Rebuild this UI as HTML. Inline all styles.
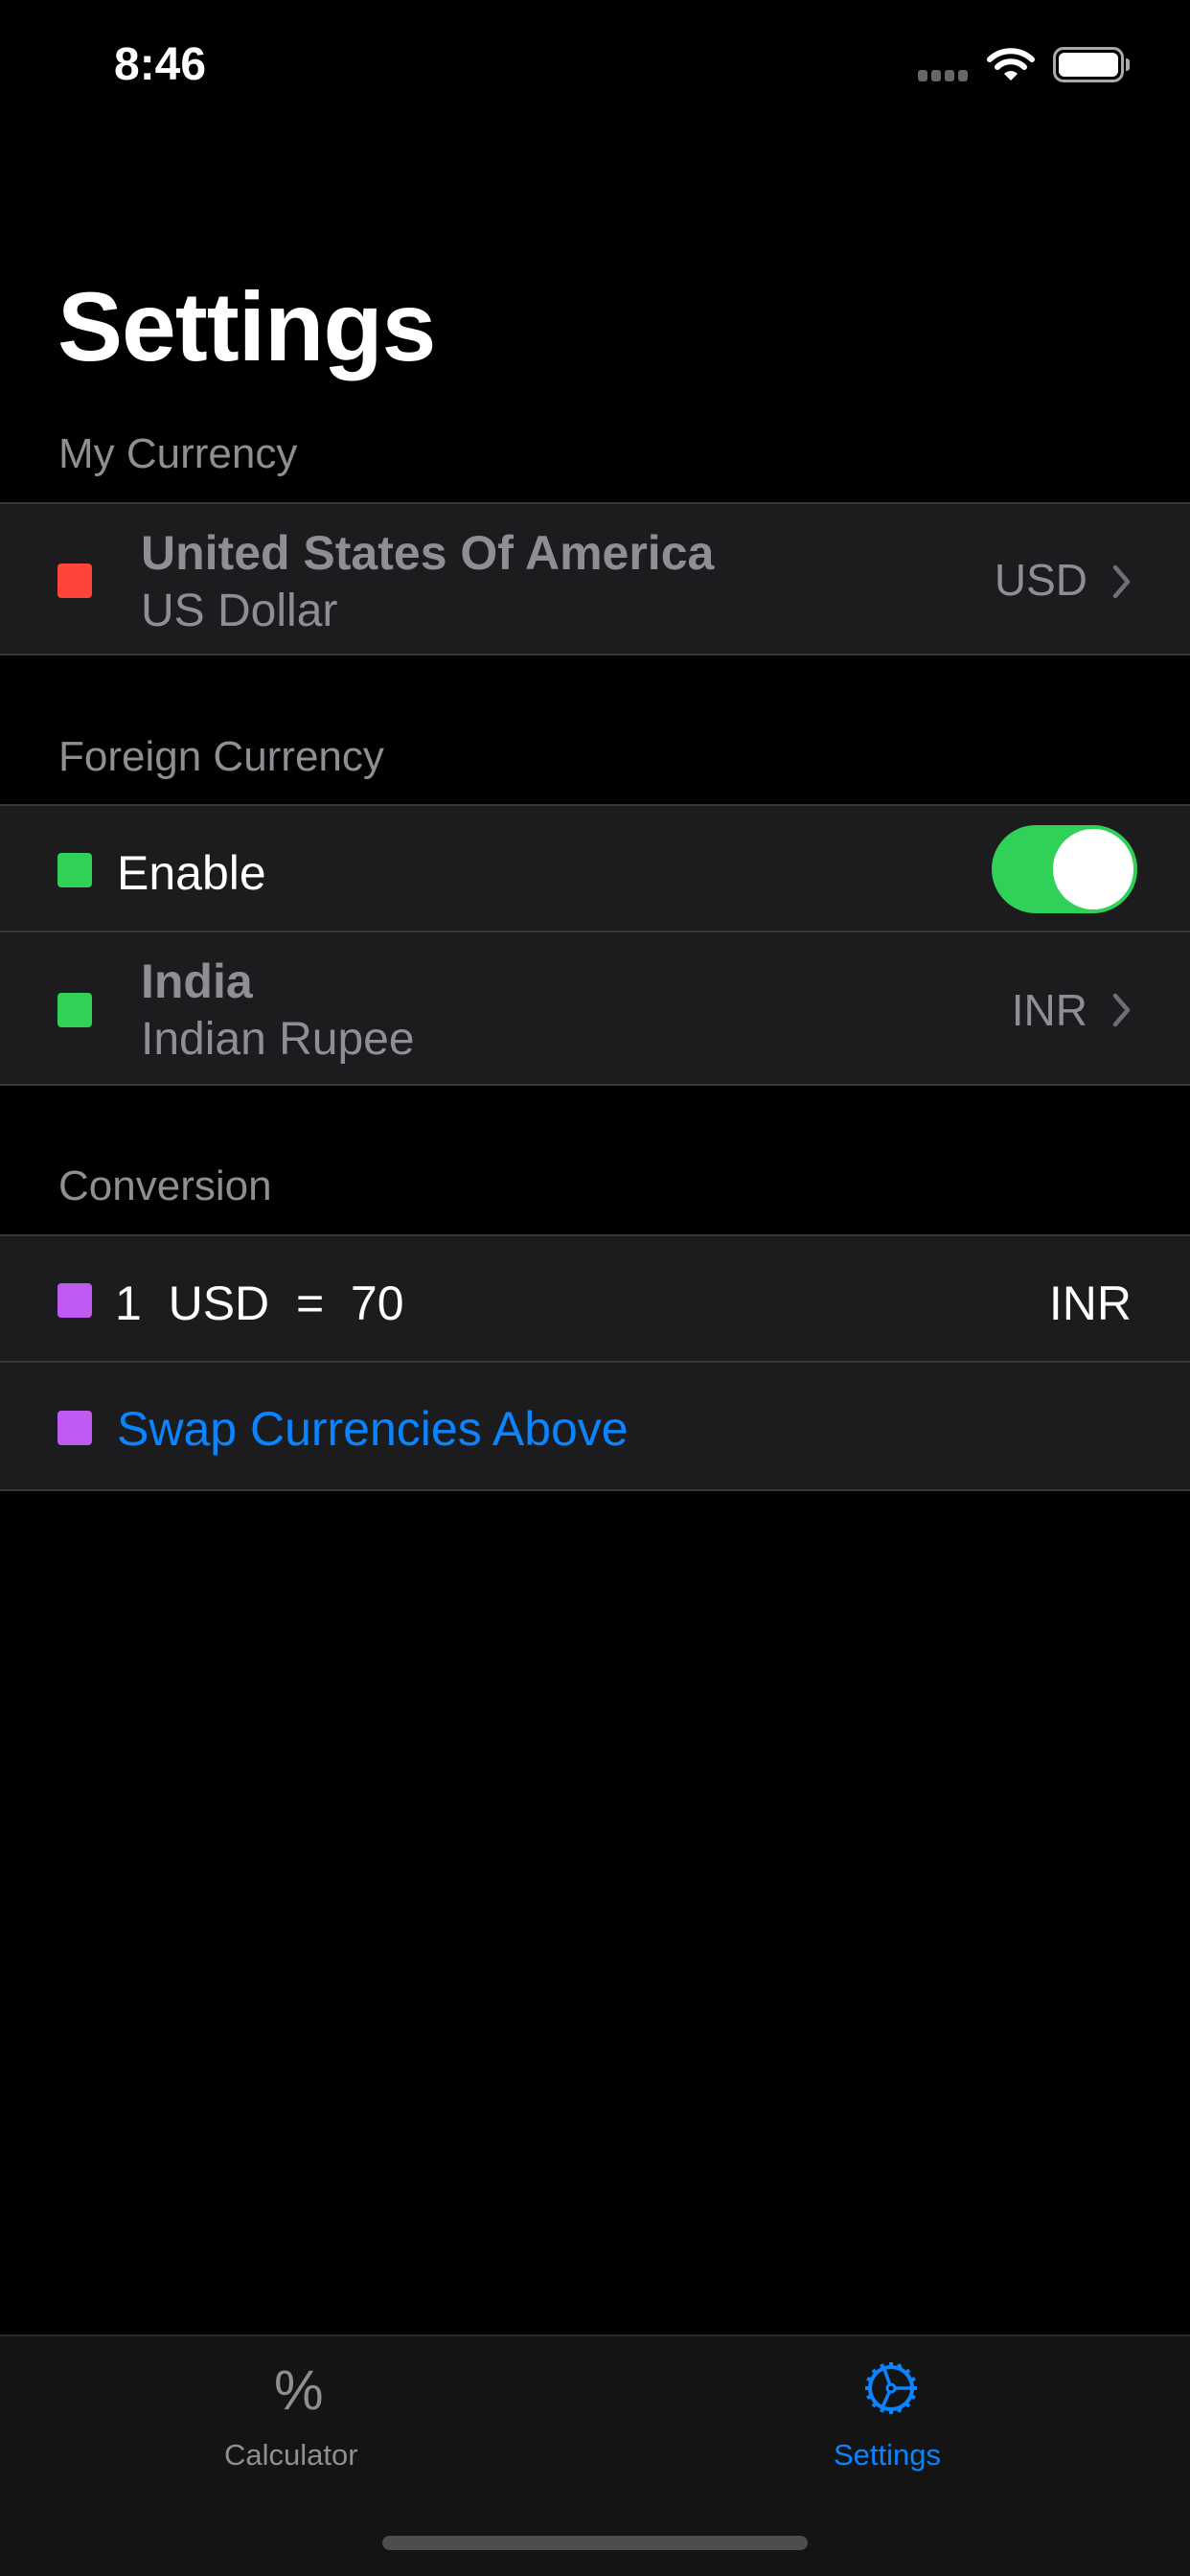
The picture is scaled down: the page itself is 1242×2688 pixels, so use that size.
<!DOCTYPE html>
<html><head><meta charset="utf-8"><style>
*{margin:0;padding:0;box-sizing:border-box}
body{width:1242px;height:2688px;background:#000;font-family:"Liberation Sans",sans-serif;position:relative;overflow:hidden;color:#fff}
.a{position:absolute}
.grp{position:absolute;left:0;width:1242px;background:#1c1c1e;border-top:2px solid #38383a;border-bottom:2px solid #38383a}
.sep{position:absolute;left:0;width:1242px;height:2px;background:#38383a}
.hdr{position:absolute;left:61px;font-size:44px;color:#8e8e93;line-height:1}
.sq{position:absolute;left:60px;width:36px;height:36px;border-radius:4px}
.t{position:absolute;line-height:1;white-space:nowrap}
</style></head><body>
<div class="t" style="left:119px;top:44px;font-size:48px;font-weight:bold">8:46</div>
<div class="a" style="left:958px;top:73px;width:56px;height:12px;display:flex;gap:4px">
<div style="width:10px;height:12px;background:#666;border-radius:3px"></div><div style="width:10px;height:12px;background:#666;border-radius:3px"></div><div style="width:10px;height:12px;background:#666;border-radius:3px"></div><div style="width:10px;height:12px;background:#666;border-radius:3px"></div></div>
<svg class="a" style="left:1030px;top:48px" width="50" height="38" viewBox="0 0 50 38"><path d="M3 14 A32 32 0 0 1 47 14" stroke="#fff" stroke-width="6" fill="none" stroke-linecap="round"/><path d="M11 22 A20 20 0 0 1 39 22" stroke="#fff" stroke-width="6" fill="none" stroke-linecap="round"/><path d="M18 29 L25 36 L32 29 A10 10 0 0 0 18 29Z" fill="#fff"/></svg>
<div class="a" style="left:1099px;top:49px;width:74px;height:37px;border:3px solid #aaa;border-radius:11px;padding:3px"><div style="width:100%;height:100%;background:#fff;border-radius:6px"></div></div>
<div class="a" style="left:1175px;top:61px;width:4px;height:13px;background:#aaa;border-radius:0 3px 3px 0"></div>

<div class="t" style="left:60px;top:290px;font-size:102px;font-weight:bold;letter-spacing:-1px">Settings</div>

<div class="hdr" style="top:452px">My Currency</div>
<div class="grp" style="top:524px;height:160px">
<div class="sq" style="background:#ff453a;top:62px"></div>
<div class="t" style="left:147px;top:26px;font-size:50px;font-weight:bold;color:#8e8e93">United States Of America</div>
<div class="t" style="left:147px;top:88px;font-size:48px;color:#8e8e93">US Dollar</div>
<div class="t" style="right:107px;top:56px;font-size:46px;color:#8e8e93">USD</div>
<svg class="a" style="left:1160px;top:62px" width="22" height="38"><path d="M4 4 L17 19 L4 34" stroke="#6e6e73" stroke-width="4.5" fill="none" stroke-linecap="round" stroke-linejoin="round"/></svg>
</div>

<div class="hdr" style="top:768px">Foreign Currency</div>
<div class="grp" style="top:839px;height:294px">
<div class="sq" style="background:#30d158;top:49px"></div>
<div class="t" style="left:122px;top:45px;font-size:50px">Enable</div>
<div class="a" style="left:1035px;top:20px;width:152px;height:92px;background:#30d158;border-radius:46px"><div class="a" style="right:4px;top:4px;width:84px;height:84px;border-radius:50%;background:#fff"></div></div>
<div class="sep" style="top:130px"></div>
<div class="sq" style="background:#30d158;top:195px"></div>
<div class="t" style="left:147px;top:158px;font-size:50px;font-weight:bold;color:#8e8e93">India</div>
<div class="t" style="left:147px;top:220px;font-size:48px;color:#8e8e93">Indian Rupee</div>
<div class="t" style="right:107px;top:190px;font-size:46px;color:#8e8e93">INR</div>
<svg class="a" style="left:1160px;top:194px" width="22" height="38"><path d="M4 4 L17 19 L4 34" stroke="#6e6e73" stroke-width="4.5" fill="none" stroke-linecap="round" stroke-linejoin="round"/></svg>
</div>

<div class="hdr" style="top:1216px">Conversion</div>
<div class="grp" style="top:1288px;height:268px">
<div class="sq" style="background:#bf5af2;top:49px"></div>
<div class="t" style="left:120px;top:45px;font-size:50px">1&nbsp;&nbsp;USD&nbsp;&nbsp;=&nbsp;&nbsp;70</div>
<div class="t" style="right:61px;top:45px;font-size:50px">INR</div>
<div class="sep" style="top:130px"></div>
<div class="sq" style="background:#bf5af2;top:182px"></div>
<div class="t" style="left:122px;top:176px;font-size:50px;color:#0a84ff">Swap Currencies Above</div>
</div>

<div class="a" style="left:0;top:2436px;width:1242px;height:252px;background:#141414;border-top:2px solid #2a2a2a"></div>
<div class="t" style="left:286px;top:2466px;font-size:58px;color:#8e8e93;font-weight:300">%</div>
<div class="t" style="left:234px;top:2546px;font-size:31px;color:#8e8e93">Calculator</div>
<svg class="a" style="left:901px;top:2462px" width="58" height="60" viewBox="0 0 58 60"><circle cx="29" cy="30" r="22" stroke="#0a84ff" stroke-width="4" fill="none"/><g stroke="#0a84ff" stroke-width="4"><path d="M29 3v6M29 51v6M2 30h6M50 30h6M10 11l4 4M44 45l4 4M10 49l4-4M44 15l4-4M19 5l2 5M37 55l2-5M19 55l2-5M37 5l2 5M4 20l5 2M54 40l-5-2M4 40l5-2M54 20l-5 2"/></g><path d="M29 30L50 30M29 30L22 10M29 30L20 50" stroke="#0a84ff" stroke-width="3.5" fill="none"/><circle cx="29" cy="30" r="4" fill="#141414" stroke="#0a84ff" stroke-width="3"/></svg>
<div class="t" style="left:870px;top:2546px;font-size:31px;color:#0a84ff">Settings</div>
<div class="a" style="left:399px;top:2646px;width:444px;height:15px;border-radius:8px;background:#4d4d4d"></div>
</body></html>
